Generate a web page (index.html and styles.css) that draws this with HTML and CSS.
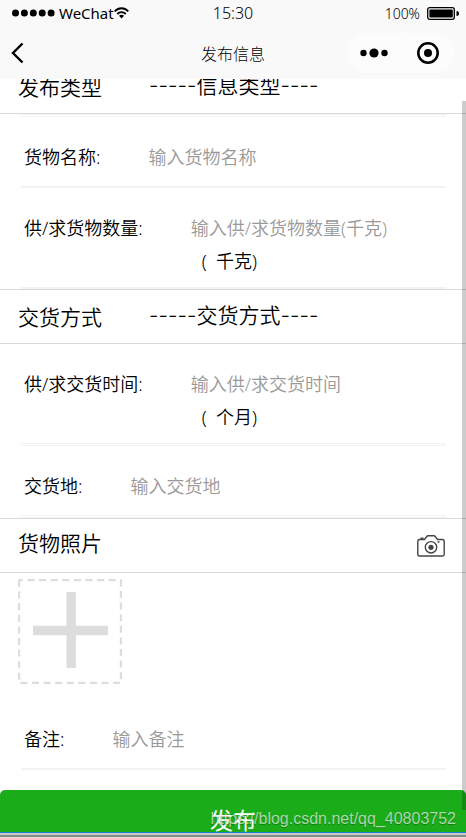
FILE: index.html
```html
<!DOCTYPE html>
<html lang="zh-CN">
<head>
    <meta charset="UTF-8">
    <meta name="viewport" content="width=device-width, initial-scale=1.0">
    <title>发布信息</title>
    <link rel="stylesheet" href="styles.css">
</head>
<body>
    <header class="top">
        <div class="status-bar">
            <div class="carrier">
                <svg width="43" height="8" viewBox="0 0 43 8">
                    <circle cx="3.5" cy="4" r="3.5"/>
                    <circle cx="12.4" cy="4" r="3.5"/>
                    <circle cx="21.3" cy="4" r="3.5"/>
                    <circle cx="30.2" cy="4" r="3.5"/>
                    <circle cx="39.1" cy="4" r="3.5"/>
                </svg>
                <span class="carrier-name">WeChat</span>
                <svg width="15" height="12" viewBox="0 0 15 12" fill="none" stroke="#000" stroke-width="1.8">
                    <path d="M0.7 4.3C4.6 0.2 10.4 0.2 14.3 4.3"/>
                    <path d="M3.2 7C5.7 4.5 9.3 4.5 11.8 7"/>
                    <path d="M5 8.8C6.4 7.5 8.6 7.5 10 8.8L7.5 11.6Z" fill="#000" stroke="none"/>
                </svg>
            </div>
            <span class="time">15:30</span>
            <div class="battery">
                <span>100%</span>
                <svg width="32" height="13" viewBox="0 0 32 13">
                    <rect x="0.7" y="0.7" width="26.6" height="11.6" rx="2" fill="none" stroke="#000" stroke-width="1.3"/>
                    <rect x="2.4" y="2.6" width="23.4" height="7.8" rx="1"/>
                    <path d="M29.5 4Q32 4 32 6.5Q32 9 29.5 9Z"/>
                </svg>
            </div>
        </div>
        <div class="nav-bar">
            <button class="back" type="button" aria-label="返回">
                <svg width="13" height="22" viewBox="0 0 13 22" fill="none" stroke="#000" stroke-width="2.4">
                    <path d="M11.5 1.5L2 11L11.5 20.5"/>
                </svg>
            </button>
            <h1>发布信息</h1>
            <div class="capsule">
                <button type="button" aria-label="更多">
                    <svg width="28" height="10" viewBox="0 0 28 10">
                        <circle cx="3.5" cy="5" r="3.2"/>
                        <circle cx="14" cy="5" r="4.6"/>
                        <circle cx="24.5" cy="5" r="3.2"/>
                    </svg>
                </button>
                <button type="button" aria-label="关闭">
                    <svg width="22" height="22" viewBox="0 0 22 22">
                        <circle cx="11" cy="11" r="9.7" fill="none" stroke="#000" stroke-width="2.5"/>
                        <circle cx="11" cy="11" r="4"/>
                    </svg>
                </button>
            </div>
        </div>
    </header>

    <main class="page">
        <form class="publish-form">
            <div class="section">
                <label for="infoType">发布类型</label>
                <select id="infoType">
                    <option>-----信息类型----</option>
                </select>
            </div>
            <hr class="open">
            <div class="field">
                <label for="goodsName">货物名称:</label>
                <input id="goodsName" type="text" placeholder="输入货物名称">
            </div>
            <hr>
            <div class="field with-unit">
                <label for="amount">供/求货物数量:</label>
                <input id="amount" type="text" placeholder="输入供/求货物数量(千克)">
                <span class="unit">(&nbsp; 千克)</span>
            </div>
            <hr>
            <div class="section">
                <label for="delivery">交货方式</label>
                <select id="delivery">
                    <option>-----交货方式----</option>
                </select>
            </div>
            <div class="field with-unit">
                <label for="deliveryTime">供/求交货时间:</label>
                <input id="deliveryTime" type="text" placeholder="输入供/求交货时间">
                <span class="unit">(&nbsp; 个月)</span>
            </div>
            <hr class="open">
            <div class="field">
                <label for="place">交货地:</label>
                <input id="place" type="text" placeholder="输入交货地">
            </div>
            <hr class="open">
            <div class="section photo-section">
                <span class="section-name">货物照片</span>
                <button class="camera" type="button" aria-label="拍照">
                    <svg width="28" height="22" viewBox="0 0 28 22" fill="none" stroke="#444" stroke-width="1.4">
                        <path d="M2.5 4.5H7.5L10 1.3Q10.4 0.8 11 0.8H17Q17.6 0.8 18 1.3L20.5 4.5H25.5Q27.2 4.5 27.2 6.2V19.3Q27.2 21 25.5 21H2.5Q0.8 21 0.8 19.3V6.2Q0.8 4.5 2.5 4.5Z"/>
                        <circle cx="14" cy="12.3" r="5.7"/>
                        <circle cx="14" cy="12.3" r="2.6" fill="#444" stroke="none"/>
                        <path d="M3.5 3.2H6.5M20.5 7H22.5"/>
                    </svg>
                </button>
            </div>
            <div class="photos">
                <button class="add-photo" type="button" aria-label="添加照片">
                    <svg width="104" height="105" viewBox="0 0 104 105" fill="none" stroke="#ddd">
                        <rect x="1" y="1" width="102" height="103" stroke-width="2.4" stroke-dasharray="7 4.6" stroke-dashoffset="3"/>
                        <path d="M53.2 13V89M15 51.5H90" stroke-width="9.4"/>
                    </svg>
                </button>
            </div>
            <div class="field">
                <label for="remark">备注:</label>
                <input id="remark" type="text" placeholder="输入备注">
            </div>
            <hr>
            <button class="submit" type="submit">发布</button>
        </form>
        <div class="scrollbar"></div>
        <span class="watermark">https://blog.csdn.net/qq_40803752</span>
    </main>
    <footer class="window-edge"></footer>
</body>
</html>
```

FILE: styles.css
```css
* {
    box-sizing: border-box;
}

body {
    margin: 0;
    height: 100vh;
    display: flex;
    flex-direction: column;
    overflow: hidden;
    background: #fff;
    color: #000;
    font-family: "Noto Sans", "Noto Sans CJK SC", sans-serif;
    font-weight: 350;
}

button, input, select {
    padding: 0;
    border: none;
    background: none;
    color: inherit;
    font: inherit;
}

svg {
    display: block;
}

.top {
    background: #f9f9f9;
}

.status-bar {
    display: grid;
    grid-template-columns: 1fr auto 1fr;
    align-items: center;
    height: 26px;
    padding: 0 7px;
    font-size: 14px;
}

.carrier, .battery {
    display: flex;
    align-items: center;
}

.carrier {
    padding-left: 5px;
}

.carrier-name {
    margin-left: 4px;
    font-size: 15px;
    font-weight: 400;
}

.time {
    font-size: 16px;
}

.battery {
    justify-content: flex-end;
    gap: 7px;
}

.nav-bar {
    display: grid;
    grid-template-columns: 1fr auto 1fr;
    align-items: center;
    height: 53px;
    padding: 0 11px;
}

.back {
    justify-self: start;
}

.nav-bar h1 {
    margin: 0;
    font-size: 16px;
    font-weight: 300;
}

.capsule {
    justify-self: end;
    display: flex;
    width: 108px;
    height: 40px;
    border-radius: 20px;
    background: #fcfcfc;
}

.capsule button {
    flex: 1;
    display: flex;
    align-items: center;
    justify-content: center;
}

.capsule button + button {
    border-left: 1px solid #f9f9f9;
}

.page {
    flex: 1;
    min-height: 0;
    position: relative;
    overflow: hidden;
}

/* form is scrolled down a little */
.publish-form {
    margin-top: -20px;
}

.section {
    display: flex;
    align-items: center;
    height: 55px;
    padding: 0 21px 2px 18px;
    border-top: 1px solid #d9d9d9;
    border-bottom: 1px solid #d9d9d9;
    font-size: 21px;
}

.section label {
    width: 131px;
}

.section select {
    flex: 1;
    appearance: none;
    font-family: Inter, "Noto Sans CJK SC", sans-serif;
}

.photo-section {
    padding-bottom: 0;
}

.photo-section .section-name {
    padding-bottom: 8px;
}

.camera {
    margin-left: auto;
}

hr {
    height: 2px;
    margin: 0 20px 0 21px;
    border: none;
    background: #f3f3f3;
}

hr.open {
    height: 3px;
    border: 1px solid #f3f3f3;
    background: #fff;
}

.field {
    display: grid;
    grid-template-columns: auto 1fr;
    column-gap: 48px;
    row-gap: 9px;
    padding: 28px 24px 17px;
    font-size: 18px;
    line-height: 24px;
}

.field.with-unit {
    padding-bottom: 14px;
}

.field input {
    width: 100%;
    height: 24px;
}

.field input::placeholder {
    color: #999;
    opacity: 1;
}

.unit {
    grid-column: 2;
    padding-left: 11px;
}

.photos {
    padding: 6px 18px 10px;
}

.submit {
    display: block;
    width: 100%;
    height: 58px;
    margin-top: 20px;
    border-radius: 5px;
    background: #1aad19;
    color: #fff;
    font-size: 23px;
    font-weight: 400;
}

.scrollbar {
    position: absolute;
    top: 22px;
    right: 0;
    bottom: 22px;
    width: 4px;
    background: rgba(0, 0, 0, 0.2);
}

.watermark {
    position: absolute;
    right: 10px;
    bottom: 4px;
    color: rgba(255, 255, 255, 0.65);
    font-family: "Liberation Sans", Arial, sans-serif;
    font-size: 16px;
    font-weight: 400;
    text-shadow: 0 1px 1px rgba(0, 0, 0, 0.3);
}

.window-edge {
    height: 6px;
    border-top: 1px solid #1a7fd4;
    border-bottom: 1px solid #ddd;
    background: linear-gradient(#c8c8c8 60%, #888 60%);
}
```
